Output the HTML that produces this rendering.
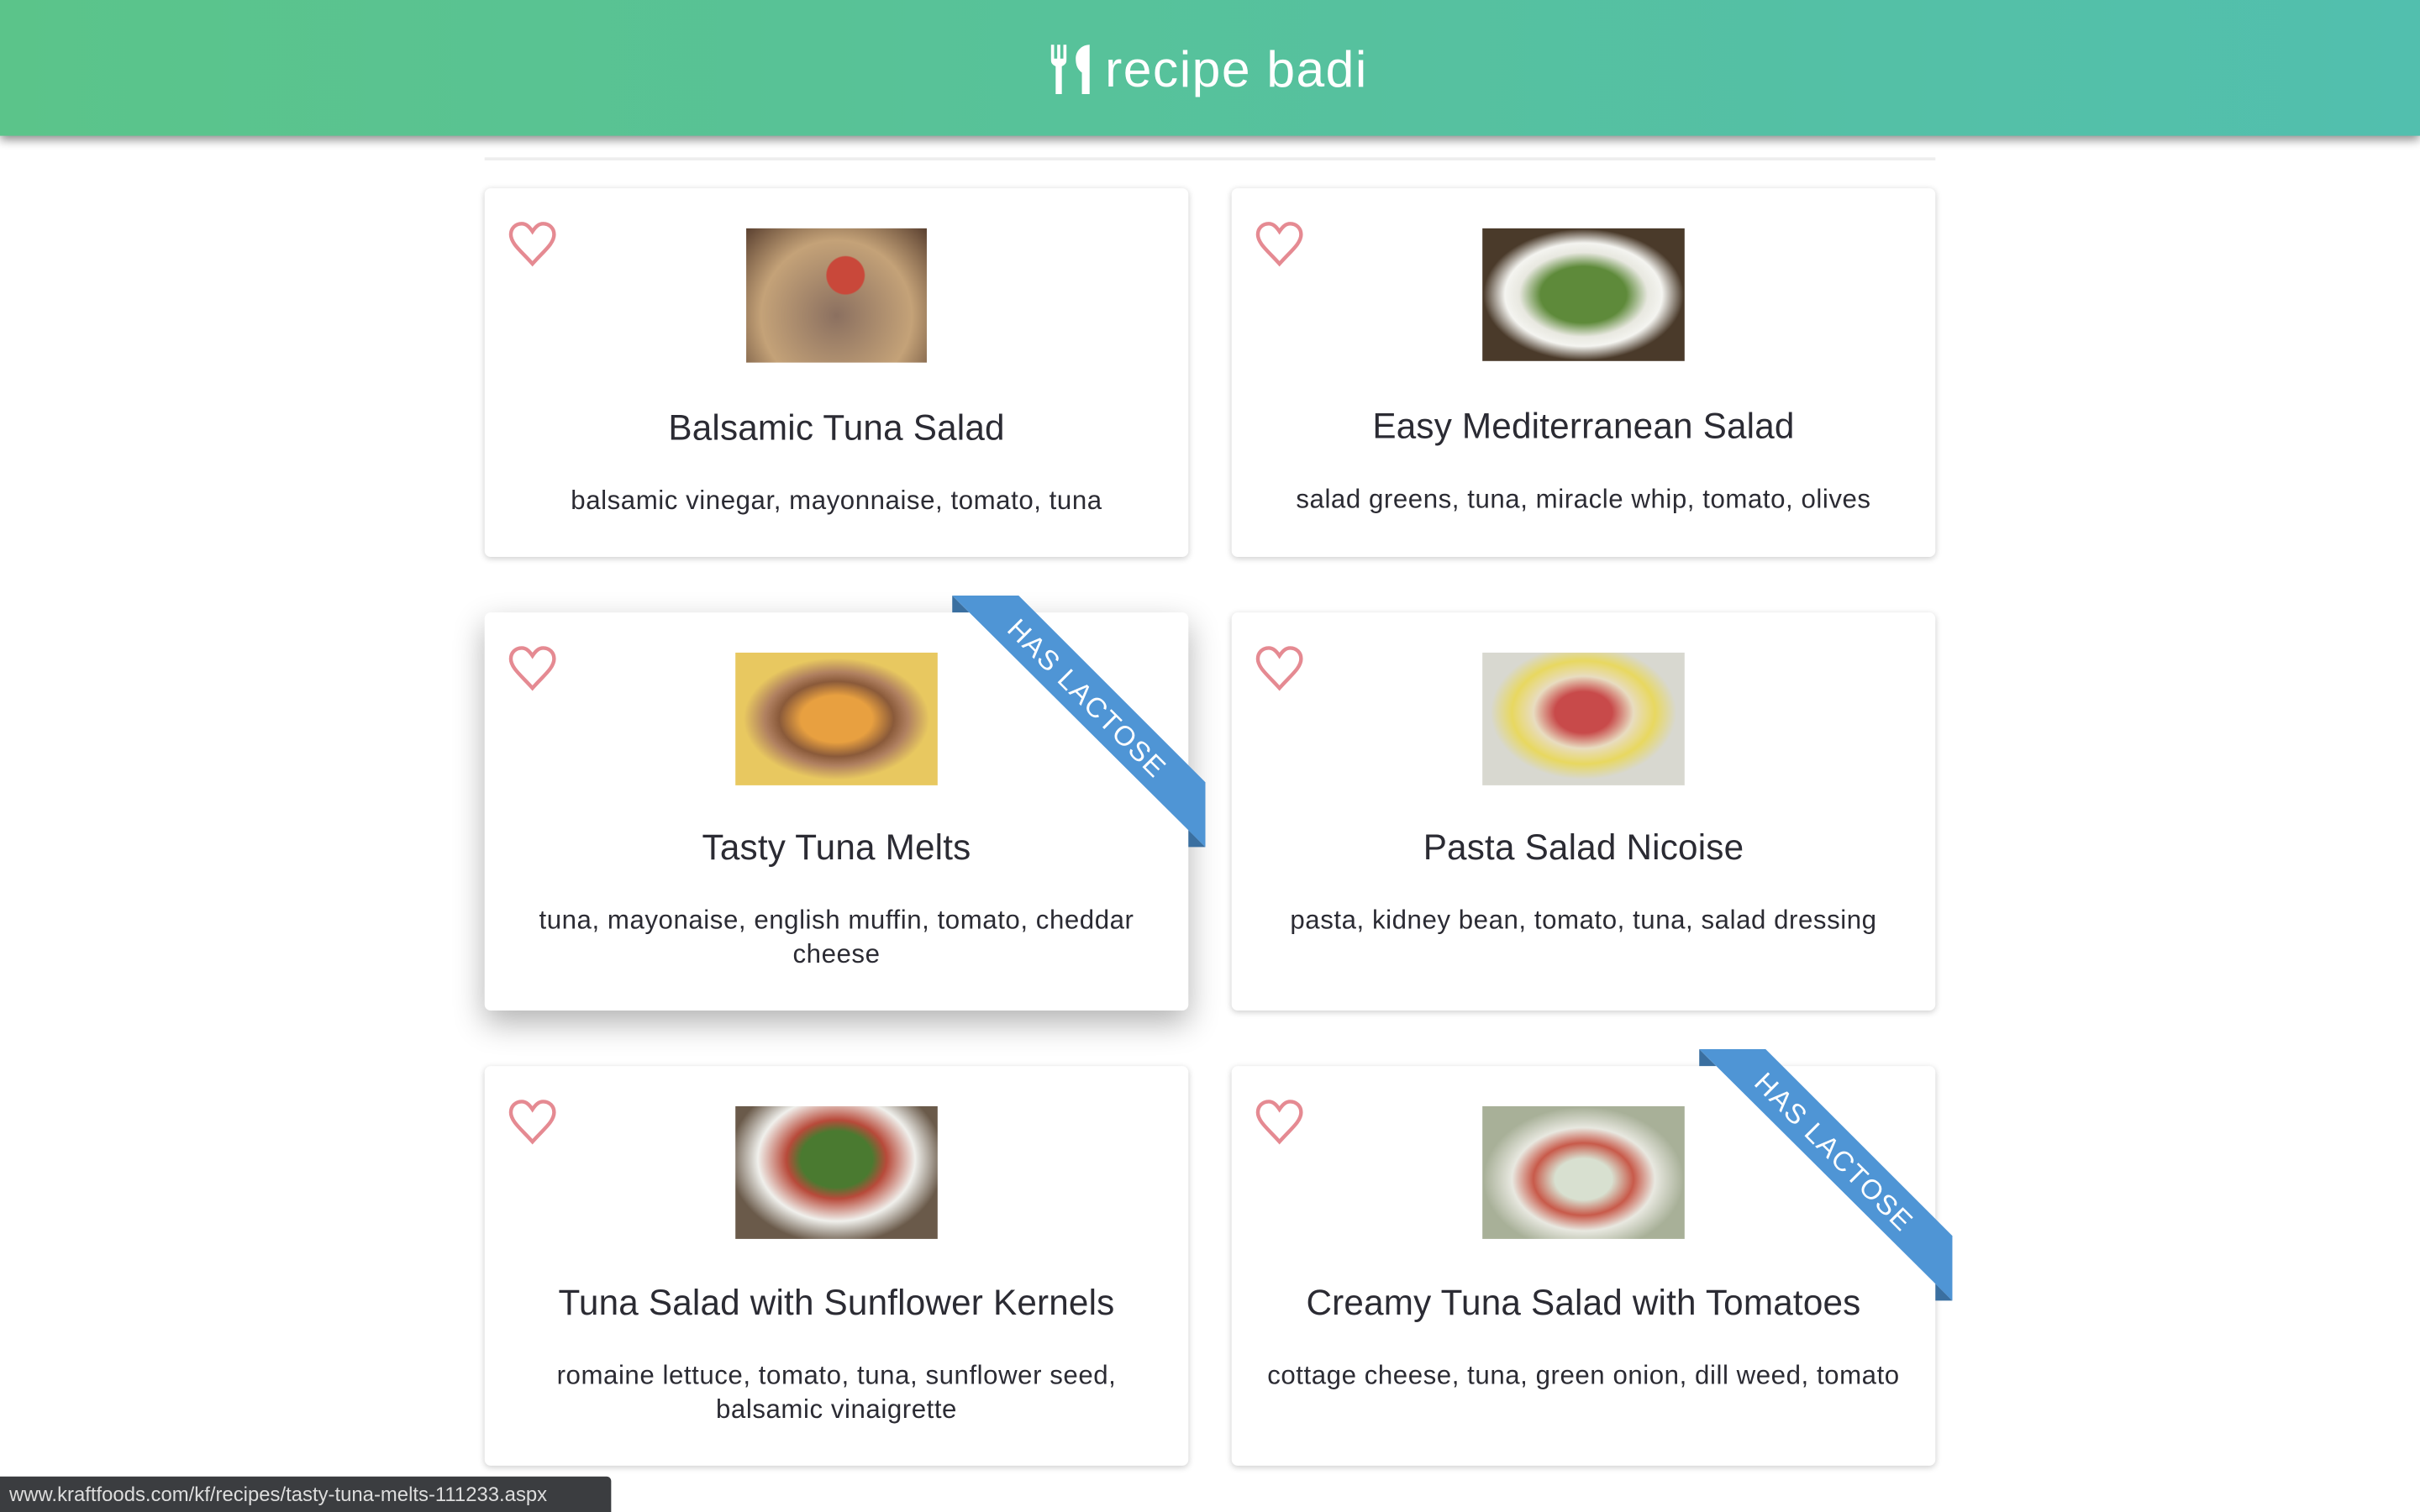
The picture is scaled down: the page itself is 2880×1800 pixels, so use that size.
<!DOCTYPE html>
<html><head><meta charset="utf-8"><style>
html,body{margin:0;padding:0;width:2880px;height:1800px;overflow:hidden;background:#fff;font-family:"Liberation Sans",sans-serif}
#w{width:1568px;height:980px;transform:scale(1.836735);transform-origin:0 0;position:relative}
.hdr{position:absolute;left:0;top:0;width:1568px;height:88px;background:linear-gradient(90deg,#5bc48a,#52bfae);box-shadow:0 3px 6px rgba(0,0,0,.45);z-index:5}
.logo{position:absolute;left:680px;top:25px;color:#fff;font-size:33px;line-height:40px;display:flex;align-items:center}
.logo span{margin-left:8px;letter-spacing:.8px}
.line{position:absolute;left:314px;top:102px;width:940px;height:2px;background:#eee}
.card{position:absolute;width:456px;background:#fff;border-radius:4px;box-shadow:0 1px 4px rgba(0,0,0,.2);text-align:center;color:#2b2b33}
.card.big{box-shadow:0 8px 20px rgba(0,0,0,.3)}
.heart{position:absolute;left:15px;top:21px}
.img{position:absolute;top:26px;left:50%;transform:translateX(-50%)}
.t{position:absolute;top:140px;left:0;right:0;font-size:23px;line-height:30px;letter-spacing:.1px}
.i{position:absolute;top:192px;left:22px;right:22px;font-size:17px;line-height:22px;letter-spacing:.3px}
.rib{position:absolute;z-index:3}
.status{position:absolute;left:0;top:957px;width:396px;height:23px;background:#3b3d40;color:#ddd;font-size:13px;line-height:23px;padding-left:6px;box-sizing:border-box;border-top-right-radius:3px}
</style></head><body><div id="w">
<div class="hdr"><div class="logo">
<svg width="28" height="34" viewBox="0 0 28 34"><path d="M1 1h2v9h2V1h2v9h2V1h2v10c0 2-1 3-3 4v18H4V15C2 14 1 13 1 11z" fill="#fff"/><path d="M26 1v32h-5V19c-3-2-4-5-4-9C17 5 21 1 26 1z" fill="#fff"/></svg>
<span>recipe badi</span></div></div>
<div class="line"></div>

<svg width="0" height="0" style="position:absolute"><defs><symbol id="h" viewBox="0 0 32 30"><path d="M16 28C9 20 2 15 2 9 2 5 5 2 9 2c3 0 5 2 7 5 2-3 4-5 7-5 4 0 7 3 7 7 0 6-7 11-14 19z" fill="none" stroke="#e58a92" stroke-width="2.4"/></symbol></defs></svg>

<div class="card" style="left:314px;top:122px;height:239px">
<svg class="heart" width="32" height="30"><use href="#h"/></svg>
<div class="img" style="width:117px;height:87px;background:radial-gradient(circle at 55% 35%,#c9483a 0 14%,transparent 15%),radial-gradient(circle at 50% 65%,#8b7060,#c4a278 60%,#5a4030)"></div>
<div class="t">Balsamic Tuna Salad</div><div class="i">balsamic vinegar, mayonnaise, tomato, tuna</div></div>

<div class="card" style="left:798px;top:122px;height:239px">
<svg class="heart" width="32" height="30"><use href="#h"/></svg>
<div class="img" style="width:131px;height:86px;background:radial-gradient(ellipse at 50% 50%,#5e8a3a 0 30%,#e8e8e0 45%,#f4f4f0 55%,#4a3a2a 70%)"></div>
<div class="t" style="top:139px">Easy Mediterranean Salad</div><div class="i" style="top:191px">salad greens, tuna, miracle whip, tomato, olives</div></div>

<div class="card big" style="left:314px;top:397px;height:258px">
<svg class="heart" width="32" height="30"><use href="#h"/></svg>
<div class="img" style="width:131px;height:86px;background:radial-gradient(ellipse at 50% 50%,#e8a040 0 25%,#8a5a3a 40%,#b08060 50%,#e8c860 65%)"></div>
<div class="t" style="top:137px">Tasty Tuna Melts</div><div class="i" style="top:189px">tuna, mayonaise, english muffin, tomato, cheddar cheese</div></div>

<div class="card" style="left:798px;top:397px;height:258px">
<svg class="heart" width="32" height="30"><use href="#h"/></svg>
<div class="img" style="width:131px;height:86px;background:radial-gradient(ellipse at 50% 45%,#c84a4a 0 20%,#e8dcc0 35%,#e8d860 50%,#d8d8d0 65%)"></div>
<div class="t" style="top:137px">Pasta Salad Nicoise</div><div class="i" style="top:189px">pasta, kidney bean, tomato, tuna, salad dressing</div></div>

<div class="card" style="left:314px;top:691px;height:259px">
<svg class="heart" width="32" height="30"><use href="#h"/></svg>
<div class="img" style="width:131px;height:86px;background:radial-gradient(ellipse at 50% 40%,#4a7a30 0 25%,#b84a3a 35%,#f0f0ec 55%,#6a5a4a 75%)"></div>
<div class="t" style="top:138px">Tuna Salad with Sunflower Kernels</div><div class="i" style="top:190px">romaine lettuce, tomato, tuna, sunflower seed, balsamic vinaigrette</div></div>

<div class="card" style="left:798px;top:691px;height:259px">
<svg class="heart" width="32" height="30"><use href="#h"/></svg>
<div class="img" style="width:131px;height:86px;background:radial-gradient(ellipse at 50% 55%,#d8e0d0 0 20%,#c85a4a 35%,#e8e8e0 50%,#a8b098 70%)"></div>
<div class="t" style="top:138px">Creamy Tuna Salad with Tomatoes</div><div class="i" style="top:190px">cottage cheese, tuna, green onion, dill weed, tomato</div></div>

<svg class="rib" style="left:610px;top:380px" width="180" height="180" viewBox="610 380 180 180">
<polygon points="617,386 628,397 617,397" fill="#3a6fa0"/><polygon points="770,538 781,549 770,549" fill="#3a6fa0"/>
<polygon points="617,386 660,386 781,507 781,549" fill="#4f95d5"/>
<text x="0" y="0" transform="translate(700,457) rotate(45)" text-anchor="middle" fill="#fff" font-size="18" font-family="Liberation Sans" letter-spacing="1">HAS LACTOSE</text></svg>
<svg class="rib" style="left:1094px;top:674px" width="180" height="180" viewBox="1094 674 180 180">
<polygon points="1101,680 1112,691 1101,691" fill="#3a6fa0"/><polygon points="1254,832 1265,843 1254,843" fill="#3a6fa0"/>
<polygon points="1101,680 1144,680 1265,801 1265,843" fill="#4f95d5"/>
<text x="0" y="0" transform="translate(1184,751) rotate(45)" text-anchor="middle" fill="#fff" font-size="18" font-family="Liberation Sans" letter-spacing="1">HAS LACTOSE</text></svg>

<div class="status">www.kraftfoods.com/kf/recipes/tasty-tuna-melts-111233.aspx</div>
</div></body></html>
